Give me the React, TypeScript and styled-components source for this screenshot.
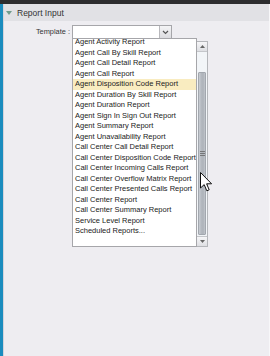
import React from 'react';
import styled, { createGlobalStyle } from 'styled-components';

const Global = createGlobalStyle`
  html, body {
    margin: 0;
    padding: 0;
    background: #eeedf1;
    font-family: "Liberation Sans", Arial, sans-serif;
  }
`;

const Page = styled.div`
  width: 270px;
  height: 356px;
  display: flex;
  flex-direction: column;
  overflow: hidden;
  position: relative;
`;

const TopStrip = styled.div`
  height: 4px;
  background: #2c2c2e;
`;

const Frame = styled.div`
  flex: 1;
  display: flex;
`;

const BlueBar = styled.div`
  width: 3px;
  background: #1a8cbe;
  border-right: 1px solid #d4d4da;
`;

const Main = styled.div`
  flex: 1;
  display: flex;
  flex-direction: column;
  border-right: 1px solid #f7f7f9;
`;

const Header = styled.div`
  height: 17px;
  background: #e1e1e5;
  display: flex;
  align-items: center;
  gap: 5px;
  padding-left: 2px;
  font-size: 8.5px;
  color: #333;
`;

const Triangle = styled.span`
  width: 0;
  height: 0;
  border-left: 3px solid transparent;
  border-right: 3px solid transparent;
  border-top: 4px solid #6f9c8c;
`;

const Body = styled.div`
  padding-top: 4px;
`;

const FormRow = styled.div`
  display: flex;
  align-items: flex-start;
`;

const Label = styled.div`
  width: 66px;
  text-align: right;
  font-size: 7.4px;
  color: #333;
  line-height: 14px;
  padding-right: 2px;
`;

const Combo = styled.div`
  position: relative;
`;

const SelectBox = styled.div`
  width: 100px;
  height: 14px;
  box-sizing: border-box;
  background: #fff;
  border: 1px solid #a6a6aa;
  display: flex;
  justify-content: flex-end;
`;

const DropButton = styled.div`
  width: 11px;
  border-left: 1px solid #b8b8bc;
  background: linear-gradient(#f4f4f6, #dcdce0);
  display: flex;
  align-items: center;
  justify-content: center;
`;

const Dropdown = styled.div`
  position: absolute;
  left: 0;
  top: 13px;
  display: flex;
  align-items: flex-start;
`;

const ListBox = styled.div`
  width: 125px;
  height: 209px;
  box-sizing: border-box;
  background: #fff;
  border: 1px solid #a6a6aa;
  overflow: hidden;
`;

const Items = styled.div`
  margin-top: -1.75px;
`;

const Item = styled.div<{ $active?: boolean }>`
  height: 10.5px;
  line-height: 10.5px;
  padding-left: 2px;
  font-size: 7.5px;
  color: #222;
  white-space: nowrap;
  background: ${(p) => (p.$active ? '#f9ecc0' : 'transparent')};
`;

const Scrollbar = styled.div`
  margin-top: 3px;
  width: 11px;
  height: 206px;
  box-sizing: border-box;
  border: 1px solid #b4b6ba;
  border-left: none;
  display: flex;
  flex-direction: column;
  background: #f2f5f8;
`;

const ArrowButton = styled.div`
  height: 9px;
  background: linear-gradient(#f6f6f8, #dedfe3);
  border-bottom: 1px solid #c4c6ca;
  display: flex;
  align-items: center;
  justify-content: center;
  &:last-child {
    border-bottom: none;
    border-top: 1px solid #c4c6ca;
  }
`;

const Track = styled.div`
  flex: 1;
  display: flex;
  flex-direction: column;
  padding-top: 20px;
`;

const Thumb = styled.div`
  flex: 1;
  margin: 0 1px 1px;
  border: 1px solid #a2a7ae;
  border-radius: 1px;
  background: linear-gradient(90deg, #c9cdd3, #b3b8bf 40%, #aeb3ba 70%, #c2c6cc);
  display: flex;
  align-items: center;
  justify-content: center;
`;

const Cursor = styled.svg`
  position: absolute;
  left: 200px;
  top: 172px;
`;

const reports = [
  'Agent Activity Report',
  'Agent Call By Skill Report',
  'Agent Call Detail Report',
  'Agent Call Report',
  'Agent Disposition Code Report',
  'Agent Duration By Skill Report',
  'Agent Duration Report',
  'Agent Sign In Sign Out Report',
  'Agent Summary Report',
  'Agent Unavailability Report',
  'Call Center Call Detail Report',
  'Call Center Disposition Code Report',
  'Call Center Incoming Calls Report',
  'Call Center Overflow Matrix Report',
  'Call Center Presented Calls Report',
  'Call Center Report',
  'Call Center Summary Report',
  'Service Level Report',
  'Scheduled Reports...',
];

const Chevron = () => (
  <svg width="7" height="5" viewBox="0 0 7 5">
    <path d="M1 1 L3.5 3.5 L6 1" fill="none" stroke="#555" strokeWidth="1.2" />
  </svg>
);

const App: React.FC = () => {
  return (
    <Page>
      <Global />
      <TopStrip />
      <Frame>
        <BlueBar />
        <Main>
          <Header>
            <Triangle />
            Report Input
          </Header>
          <Body>
            <FormRow>
              <Label>Template :</Label>
              <Combo>
                <SelectBox>
                  <DropButton>
                    <Chevron />
                  </DropButton>
                </SelectBox>
                <Dropdown>
                  <ListBox>
                    <Items>
                      {reports.map((r) => (
                        <Item key={r} $active={r === 'Agent Disposition Code Report'}>
                          {r}
                        </Item>
                      ))}
                    </Items>
                  </ListBox>
                  <Scrollbar>
                    <ArrowButton>
                      <svg width="5" height="3" viewBox="0 0 5 3">
                        <path d="M0 3 L2.5 0 L5 3 Z" fill="#666" />
                      </svg>
                    </ArrowButton>
                    <Track>
                      <Thumb>
                        <svg width="5" height="5" viewBox="0 0 5 5">
                          <path d="M0 0.5 H5 M0 2.5 H5 M0 4.5 H5" stroke="#666" strokeWidth="0.8" />
                        </svg>
                      </Thumb>
                    </Track>
                    <ArrowButton>
                      <svg width="5" height="3" viewBox="0 0 5 3">
                        <path d="M0 0 L2.5 3 L5 0 Z" fill="#666" />
                      </svg>
                    </ArrowButton>
                  </Scrollbar>
                </Dropdown>
              </Combo>
            </FormRow>
          </Body>
        </Main>
      </Frame>
      <Cursor width="13" height="20" viewBox="0 0 13 20">
        <path d="M0.5 0.5 L0.5 16 L4.2 12.6 L6.8 18.8 L9.2 17.8 L6.6 11.8 L11.6 11.8 Z" fill="#fff" stroke="#111" strokeWidth="1" strokeLinejoin="round" />
      </Cursor>
    </Page>
  );
};

export default App;
